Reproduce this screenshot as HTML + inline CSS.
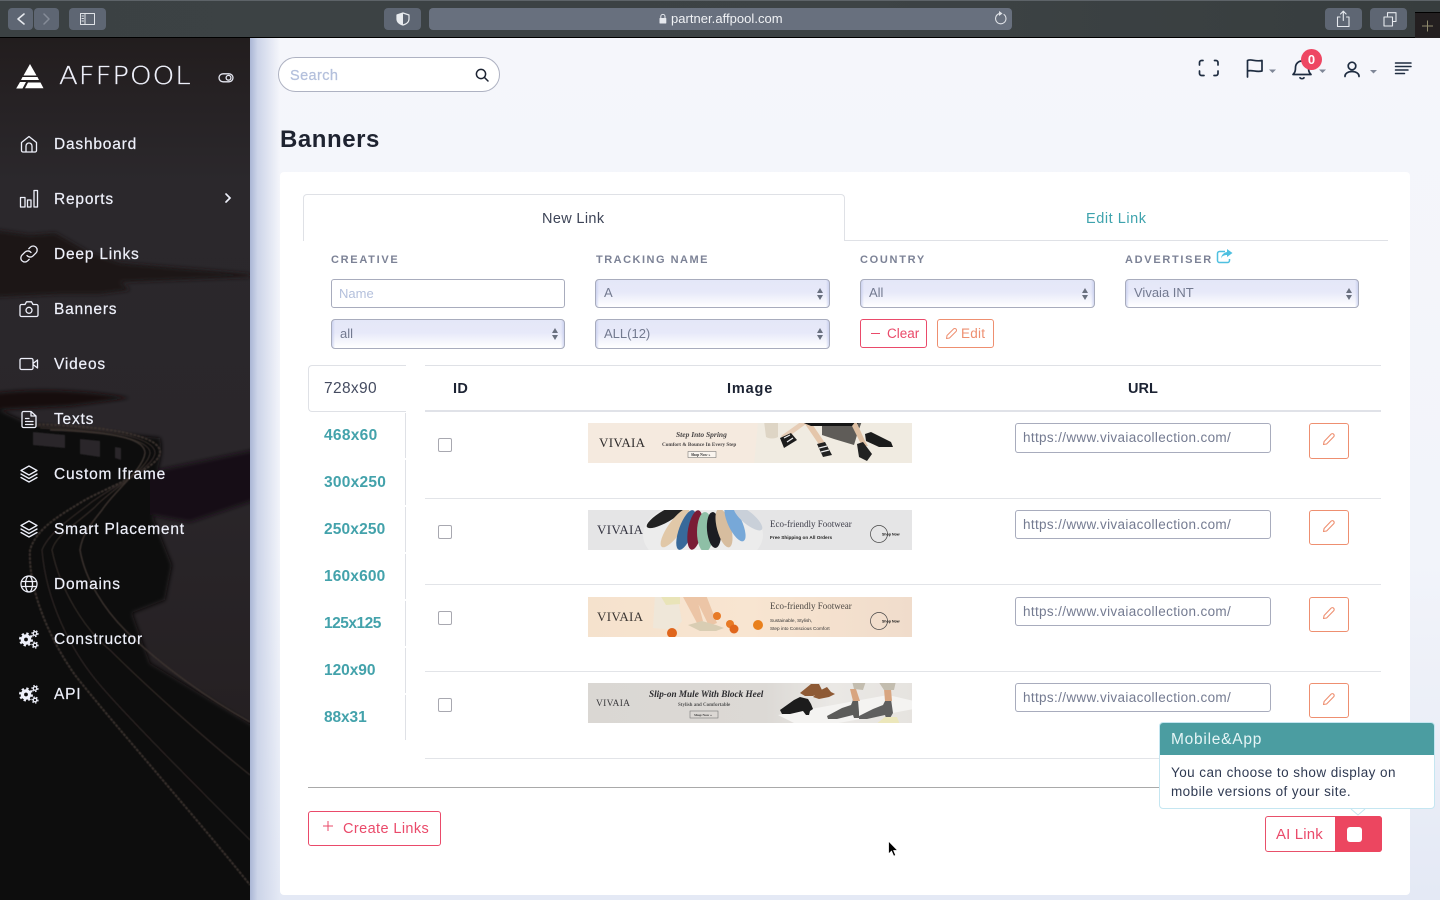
<!DOCTYPE html>
<html lang="en"><head><meta charset="utf-8"><title>Banners</title>
<style>
*{box-sizing:border-box}
html,body{margin:0;padding:0;width:1440px;height:900px;overflow:hidden;background:#f4f6fb;font-family:"Liberation Sans",sans-serif}
.a{position:absolute}
.t{position:absolute;white-space:nowrap}
.bb{position:absolute;top:8px;height:22px;background:#5e6673;border-radius:4px}
.nav{position:absolute;left:54px;color:#eef0fa;font:15.5px/20px "Liberation Sans",sans-serif;letter-spacing:.8px;white-space:nowrap;-webkit-text-stroke:.2px #eef0fa}
.ni{position:absolute;left:19px;width:20px;height:20px;fill:none;stroke:#eef0fa;stroke-width:1.3;stroke-linecap:round;stroke-linejoin:round}
.lb{position:absolute;top:254px;font:bold 11px/13px "Liberation Sans",sans-serif;letter-spacing:1.7px;color:#7c8296;white-space:nowrap}
.in{position:absolute;background:#fff;border:1px solid #a8acbd;border-radius:3px;font-size:13px;color:#777d92;padding:0 7px;line-height:27px;white-space:nowrap}
.sel{position:absolute;height:29px;border:1px solid #a8acbd;border-radius:4px;background:linear-gradient(90deg,rgba(190,198,235,.65),rgba(255,255,255,0) 3px,rgba(255,255,255,0) calc(100% - 3px),rgba(190,198,235,.65)),linear-gradient(#e4e7f8 0,#e7e9f9 45%,#fff 100%);font-size:13px;color:#737a90;padding:0 8px;line-height:25px}
.sel:after{content:"";position:absolute;right:6px;top:8px;width:0;height:0;border-left:3px solid transparent;border-right:3px solid transparent;border-bottom:5px solid #69707f}
.sel:before{content:"";position:absolute;right:6px;top:15px;width:0;height:0;border-left:3px solid transparent;border-right:3px solid transparent;border-top:5px solid #69707f}
.vt{position:absolute;left:324px;color:#43a2ab;font:bold 15.5px/18px "Liberation Sans",sans-serif;letter-spacing:.15px;white-space:nowrap}
.vl{position:absolute;left:405px;width:1px;height:44px;background:#dfe1e6}
.hl{position:absolute;left:425px;width:956px;height:1px;background:#e2e4e8}
.cb{position:absolute;left:438px;width:14px;height:14px;border:1px solid #a8a8b0;border-radius:2px;background:#fff}
.url{position:absolute;left:1015px;width:256px;height:30px;background:#fff;border:1px solid #a8acbd;border-radius:3px;font-size:13.5px;letter-spacing:.35px;color:#747b91;padding-left:7px;line-height:27px;white-space:nowrap}
.eb{position:absolute;left:1309px;width:40px;height:36px;border:1px solid #ee8f70;border-radius:3px;background:#fff}
.eb svg{position:absolute;left:12px;top:8px}
.ban{position:absolute;left:588px;width:324px;height:40px;overflow:hidden}
svg text{font-family:"Liberation Serif",serif}
</style></head><body>

<!-- browser bar -->
<div class="a" style="left:0;top:0;width:1440px;height:38px;background:linear-gradient(90deg,#3b4143,#3d4345 60%,#373d3e);border-top:1px solid #5d6368;border-bottom:1px solid #000"></div>
<div class="bb" style="left:8px;width:25px"></div>
<div class="bb" style="left:34px;width:25px"></div>
<div class="bb" style="left:69px;width:37px"></div>
<div class="bb" style="left:384px;width:37px"></div>
<div class="bb" style="left:429px;width:583px;background:#68707e"></div>
<div class="bb" style="left:1325px;width:37px"></div>
<div class="bb" style="left:1370px;width:37px"></div>
<svg class="a" style="left:0;top:0" width="1440" height="38" fill="none" stroke-linecap="round" stroke-linejoin="round">
<path d="M24 14l-6 5 6 5" stroke="#e6e9ee" stroke-width="1.6"/>
<path d="M44 14l5 5-5 5" stroke="#858c98" stroke-width="1.5"/>
<path d="M80.5 13.5h14v11h-14zM85 13.5v11M82 16h1.5M82 18.500h1.500M82 21h1.500" stroke="#dfe2e7"/>
<path d="M403 13l-6 2v4c0 3 2.500 5 6 6 3.500-1 6-3 6-6v-4z" stroke="#e8ebef" stroke-width="1.200"/>
<path d="M403 13l-6 2v4c0 3 2.500 5 6 6z" fill="#e8ebef"/>
<path d="M660 18.500h5.800v4.500H660z" fill="#e6e9ee" stroke="#e6e9ee"/>
<path d="M660.800 18v-1.500a2.100 2.100 0 0 1 4.200 0V18" stroke="#e6e9ee"/>
<path d="M1004 14.500a5.200 5.200 0 1 1-5-.8" stroke="#dfe2e7" stroke-width="1.100"/>
<path d="M999 11l3.500 2.500-3.500 2.500z" fill="#dfe2e7"/>
<path d="M1340 17h-2.500v9.500h11.500V17h-2.500M1343.300 20.500V11.500M1340.500 14l2.800-2.800 2.800 2.800" stroke="#e6e9ee" stroke-width="1.100"/>
<path d="M1384 18.500v7.500h8.500v-9H1384zM1387.500 16v-3.300h8.500v8.800h-3" stroke="#e6e9ee" stroke-width="1.100"/>
</svg>
<div class="t" style="left:671px;top:11px;font:13px/16px 'Liberation Sans',sans-serif;color:#f0f2f5;letter-spacing:.03px">partner.affpool.com</div>
<div class="a" style="left:1415px;top:12px;width:25px;height:26px;background:#231f20;border-top:1px solid #000"></div>
<svg class="a" style="left:1420px;top:18px" width="15" height="15"><path d="M2 8h11M7.500 2.500v11" stroke="#8f8a6c" stroke-width="1"/></svg>

<!-- main background -->
<div class="a" style="left:250px;top:38px;width:1190px;height:862px;background:linear-gradient(#f5f6fb 0,#f2f4fa 60%,#e4e9f5 100%)"></div>
<div class="a" style="left:250px;top:38px;width:30px;height:862px;background:linear-gradient(90deg,#aab6d5 0,#ccd4e8 25%,rgba(240,243,250,0) 100%)"></div>

<!-- sidebar -->
<svg class="a" style="left:0;top:38px" width="250" height="862" viewBox="0 38 250 862">
<defs>
<linearGradient id="sk" gradientUnits="userSpaceOnUse" x1="0" y1="38" x2="0" y2="760"><stop offset="0" stop-color="#221d1e"/><stop offset=".2" stop-color="#2b282c"/><stop offset=".6" stop-color="#2a262a"/><stop offset="1" stop-color="#241f21"/></linearGradient>
<filter id="b1" x="-5%" y="-5%" width="110%" height="110%"><feGaussianBlur stdDeviation="2"/></filter>
<filter id="b2" x="-5%" y="-5%" width="110%" height="110%"><feGaussianBlur stdDeviation=".5"/></filter>
</defs>
<rect x="0" y="38" width="250" height="862" fill="url(#sk)"/>
<g filter="url(#b1)">
<path d="M-5 230l35 5 25-2 35 20 30 10 130 11v3l-130 5 10 8-30 4-40 0-65 3z" fill="#1c1617"/>
<path d="M-5 393Q60 386 130 398L70 406-5 410z" fill="#151011"/>
<path d="M-5 408L30 424 160 438C166 460 150 480 150 510L172 565 165 600 132 613 150 663 255 727V905H-5z" fill="#0b0707"/>
<path d="M150 472L255 450V500L190 522 150 515z" fill="#171112"/>
</g>
<g filter="url(#b2)" fill="none">
<path d="M33 432l32 3v13l-32-3zM80 439l20 2v16l-20-3zM115 447l6 1v12l-6-2z" fill="#2b272b"/>
<path d="M30 424C110 426 162 436 160 453 158 470 100 490 80 503 55 518 36 530 30 550 28 590 50 640 75 675 110 720 190 810 250 885" stroke="#3a332e" stroke-width="2" stroke-dasharray="3 1"/>
<path d="M35 426C110 428 155 438 155 453 153 470 105 490 88 505 65 522 48 535 42 550 46 600 70 650 100 685 130 720 200 790 250 840" stroke="#2f2825" stroke-width="1.200"/>
<path d="M40 428C110 430 150 440 150 453 148 470 110 490 95 507 75 525 56 535 52 550 60 590 85 630 110 650 140 680 200 735 250 775" stroke="#332c28" stroke-width="1.200"/>
<path d="M50 430C120 432 145 440 145 453 143 470 115 490 102 510 90 525 82 535 80 550 85 580 105 610 125 630 160 665 210 700 250 722" stroke="#3a332e" stroke-width="1.500"/>
</g>
</svg>
<!-- logo -->
<svg class="a" style="left:15px;top:62px" width="32" height="28"><path d="M15 2l6.500 11.500H8.500z" fill="#fff"/><path d="M7.500 15h15l1.500 3H6z" fill="#fff"/><path d="M5 20h6l-3.500 6.500H1.200zM13 20.500h12.500l3 5.800H10z" fill="#fff"/></svg>
<div class="t" style="left:59px;top:61px;color:#eef0fa;font:200 25px/30px 'DejaVu Sans',sans-serif;letter-spacing:.9px;transform:scaleX(1.1);transform-origin:0 0;-webkit-text-stroke:.3px #eef0fa">AFFPOOL</div>
<svg class="a" style="left:217px;top:71px" width="18" height="14" fill="none" stroke="#e6e8f2"><rect x="2" y="2.800" width="14" height="8" rx="4" stroke-width="1.300"/><circle cx="11.500" cy="6.800" r="2.400" stroke-width="1.300"/></svg>

<svg class="ni" style="top:134px" viewBox="0 0 20 20"><path d="M2.500 8.500L10 2.500l7.500 6v8a1.500 1.500 0 0 1-1.500 1.500H4a1.500 1.500 0 0 1-1.500-1.500zM7 18v-6a3 3 0 0 1 6 0v6"/></svg>
<div class="nav" style="top:135px">Dashboard</div>
<svg class="ni" style="top:189px" viewBox="0 0 20 20"><path d="M1.500 8.500h4.500V18H1.500zM8.500 11h3.500v7H8.500zM15 1.500h3.500V18H15z"/></svg>
<div class="nav" style="top:190px">Reports</div>
<svg class="a" style="left:222px;top:192px" width="12" height="12" fill="none"><path d="M4 2l4 4-4 4" stroke="#eef0fa" stroke-width="1.700" stroke-linecap="round"/></svg>
<svg class="ni" style="top:244px" viewBox="0 0 20 20"><path d="M8 11.500a4 4 0 0 0 6 .4l3-3a4 4 0 0 0-5.700-5.700L9.800 4.700M12 8.500a4 4 0 0 0-6-.4l-3 3a4 4 0 0 0 5.700 5.700l1.500-1.500"/></svg>
<div class="nav" style="top:245px">Deep Links</div>
<svg class="ni" style="top:299px" viewBox="0 0 20 20"><path d="M2.500 5.500h3.500L7.500 2.800h5L14 5.500h3.500a1.500 1.500 0 0 1 1.500 1.500v9a1.500 1.500 0 0 1-1.500 1.500h-15A1.500 1.500 0 0 1 1 16V7a1.500 1.500 0 0 1 1.500-1.500z"/><circle cx="10" cy="11.300" r="3"/></svg>
<div class="nav" style="top:300px">Banners</div>
<svg class="ni" style="top:354px" viewBox="0 0 20 20"><path d="M2.500 4.500h10a1.500 1.500 0 0 1 1.500 1.500v8a1.500 1.500 0 0 1-1.500 1.500h-10A1.500 1.500 0 0 1 1 14V6a1.500 1.500 0 0 1 1.500-1.500zM14 9.500L18.500 6v8L14 10.500"/></svg>
<div class="nav" style="top:355px">Videos</div>
<svg class="ni" style="top:409px" viewBox="0 0 20 20"><path d="M4.500 2.500H12l5 4.500v10a1.500 1.500 0 0 1-1.500 1.500h-11A1.500 1.500 0 0 1 3 17V4a1.500 1.500 0 0 1 1.500-1.500zM12 2.500V7h5M6.500 9.500H10M6.500 12.500h7.500M6.500 15.500h7.500"/></svg>
<div class="nav" style="top:410px">Texts</div>
<svg class="ni" style="top:464px" viewBox="0 0 20 20"><path d="M10 2L2 6.500 10 11l8-4.500zM2 10l8 4.500L18 10M2 13.500L10 18l8-4.500"/></svg>
<div class="nav" style="top:465px">Custom Iframe</div>
<svg class="ni" style="top:519px" viewBox="0 0 20 20"><path d="M10 2L2 6.500 10 11l8-4.500zM2 10l8 4.500L18 10M2 13.500L10 18l8-4.500"/></svg>
<div class="nav" style="top:520px">Smart Placement</div>
<svg class="ni" style="top:574px" viewBox="0 0 20 20"><circle cx="10" cy="10" r="8"/><ellipse cx="10" cy="10" rx="3.500" ry="8"/><path d="M2.500 7.500h15M2.500 12.500h15"/></svg>
<div class="nav" style="top:575px">Domains</div>
<svg class="ni" style="top:629px" viewBox="0 0 20 20"><circle cx="7" cy="10.500" r="3.600" stroke-width="3.400"/><circle cx="7" cy="10.500" r="6" stroke-width="2" stroke-dasharray="2.360 2.360" stroke-linecap="butt"/><circle cx="16" cy="4.500" r="1.800" stroke-width="1.300"/><circle cx="16" cy="4.500" r="3" stroke-width="1.200" stroke-dasharray="1.500 1.500" stroke-linecap="butt"/><circle cx="16" cy="16" r="1.800" stroke-width="1.300"/><circle cx="16" cy="16" r="3" stroke-width="1.200" stroke-dasharray="1.500 1.500" stroke-linecap="butt"/></svg>
<div class="nav" style="top:630px">Constructor</div>
<svg class="ni" style="top:684px" viewBox="0 0 20 20"><circle cx="7" cy="10.500" r="3.600" stroke-width="3.400"/><circle cx="7" cy="10.500" r="6" stroke-width="2" stroke-dasharray="2.360 2.360" stroke-linecap="butt"/><circle cx="16" cy="4.500" r="1.800" stroke-width="1.300"/><circle cx="16" cy="4.500" r="3" stroke-width="1.200" stroke-dasharray="1.500 1.500" stroke-linecap="butt"/><circle cx="16" cy="16" r="1.800" stroke-width="1.300"/><circle cx="16" cy="16" r="3" stroke-width="1.200" stroke-dasharray="1.500 1.500" stroke-linecap="butt"/></svg>
<div class="nav" style="top:685px">API</div>

<!-- topbar -->
<div class="a" style="left:278px;top:57px;width:222px;height:35px;background:#fff;border:1px solid #aeb2c2;border-radius:18px"></div>
<div class="t" style="left:290px;top:67px;font:14.500px/18px 'Liberation Sans',sans-serif;color:#b4c0dc;letter-spacing:.4px;-webkit-text-stroke:.25px #b4c0dc">Search</div>
<svg class="a" style="left:474px;top:67px" width="16" height="16" fill="none" stroke="#1d2433" stroke-width="1.500"><circle cx="7" cy="7" r="4.600"/><path d="M10.500 10.500l3.500 3.500" stroke-linecap="round"/></svg>

<svg class="a" style="left:1190px;top:50px" width="235" height="40" fill="none" stroke="#1e2c40" stroke-width="1.700" stroke-linecap="round" stroke-linejoin="round">
<path d="M13 10.500h-1.500a2 2 0 0 0-2 2V15M24.500 10.500H26a2 2 0 0 1 2 2V15M9.500 21v2.500a2 2 0 0 0 2 2H14M28 21v2.500a2 2 0 0 1-2 2H24"/>
<path d="M57.500 27V10.500c4-2 7 1.500 14.500 0V21c-6 1.500-10-1.500-14.500 0"/>
<path d="M79 19.500h7l-3.500 3.500z" fill="#7f8797" stroke="none"/>
<path d="M103 24.500c2-2 2.500-3.500 2.500-7a6.500 6.500 0 0 1 13 0c0 3.500.5 5 2.500 7zM110 27.800c1 1.200 3 1.200 4 0"/>
<path d="M129 19.500h7l-3.500 3.500z" fill="#7f8797" stroke="none"/>
<circle cx="162" cy="16" r="3.800"/><path d="M155 26.500v-.5a7 4.500 0 0 1 14 0v.5"/>
<path d="M180 20h7l-3.500 3.500z" fill="#7f8797" stroke="none"/>
<path d="M205.500 13h15.500M205.500 16.500h15.500M205.500 20h12.500M205.500 23.500h9" stroke-width="1.500"/>
</svg>
<div class="a" style="left:1301px;top:49px;width:21px;height:21px;border-radius:50%;background:#ee4763;color:#fff;font:bold 13px/21px 'Liberation Sans',sans-serif;text-align:center">0</div>

<div class="t" style="left:280px;top:125px;font:bold 24px/30px 'Liberation Sans',sans-serif;color:#1e2330;letter-spacing:.55px">Banners</div>

<!-- card -->
<div class="a" style="left:280px;top:172px;width:1130px;height:723px;background:#fff;border-radius:4px"></div>
<div class="a" style="left:845px;top:240px;width:543px;height:1px;background:#dfe1e6"></div>
<div class="a" style="left:303px;top:194px;width:542px;height:47px;border:1px solid #dfe1e6;border-bottom:0;border-radius:4px 4px 0 0;background:#fff"></div>
<div class="t" style="left:542px;top:210px;font:14.500px/18px 'Liberation Sans',sans-serif;color:#3d4457;letter-spacing:.35px">New Link</div>
<div class="t" style="left:1086px;top:210px;font:14.500px/18px 'Liberation Sans',sans-serif;color:#3ea3ad;letter-spacing:.55px">Edit Link</div>

<div class="lb" style="left:331px">CREATIVE</div>
<div class="lb" style="left:596px;letter-spacing:1.5px">TRACKING NAME</div>
<div class="lb" style="left:860px">COUNTRY</div>
<div class="lb" style="left:1125px">ADVERTISER</div>
<svg class="a" style="left:1216px;top:248px" width="18" height="16" fill="none"><path d="M9 3.500H3.500a2 2 0 0 0-2 2v7a2 2 0 0 0 2 2h8a2 2 0 0 0 2-2V11" stroke="#4fc0e0" stroke-width="1.500"/><path d="M11 1l5.500 4-5.500 4V7c-3 0-5 1-6 3.500C5.500 6.500 8 4.500 11 4z" fill="#4fc0e0"/></svg>

<div class="in" style="left:331px;top:279px;width:234px;height:29px;color:#b4c0dc;font-size:13px">Name</div>
<div class="sel" style="left:595px;top:279px;width:235px">A</div>
<div class="sel" style="left:860px;top:279px;width:235px">All</div>
<div class="sel" style="left:1125px;top:279px;width:234px">Vivaia INT</div>
<div class="sel" style="left:331px;top:319px;width:234px;height:30px;line-height:27px">all</div>
<div class="sel" style="left:595px;top:319px;width:235px;height:30px;line-height:27px">ALL(12)</div>

<div class="a" style="left:860px;top:319px;width:67px;height:29px;border:1px solid #ea4a6a;border-radius:3px;background:#fff"></div>
<div class="a" style="left:871px;top:333px;width:9px;height:1px;background:#ea4a6a"></div>
<div class="t" style="left:887px;top:325px;font:13.500px/17px 'Liberation Sans',sans-serif;color:#ea4a6a">Clear</div>
<div class="a" style="left:937px;top:319px;width:57px;height:29px;border:1px solid #ee8f70;border-radius:3px;background:#fff"></div>
<svg class="a" style="left:945px;top:327px" width="13" height="13" fill="none" stroke="#ee8f70" stroke-linejoin="round"><path d="M1.500 11.500l.5-3L8.500 2a1.400 1.400 0 0 1 2.500 2.500L4.500 11z"/></svg>
<div class="t" style="left:961px;top:325px;font:13.500px/17px 'Liberation Sans',sans-serif;color:#ee8f70;letter-spacing:.25px">Edit</div>

<!-- vertical tabs + table -->
<div class="a" style="left:425px;top:365px;width:956px;height:1px;background:#dfe1e6"></div>
<div class="a" style="left:308px;top:365px;width:98px;height:47px;border:1px solid #dfe1e6;border-right:0;border-radius:4px 0 0 4px;background:#fff"></div>
<div class="t" style="left:324px;top:380px;font:15.500px/18px 'Liberation Sans',sans-serif;color:#444b60;letter-spacing:.35px">728x90</div>
<div class="vt" style="top:427px;letter-spacing:.3px">468x60</div>
<div class="vt" style="top:474px;letter-spacing:.25px">300x250</div>
<div class="vt" style="top:521px">250x250</div>
<div class="vt" style="top:568px">160x600</div>
<div class="vt" style="top:615px;letter-spacing:-.5px">125x125</div>
<div class="vt" style="top:662px;letter-spacing:-.05px">120x90</div>
<div class="vt" style="top:709px;letter-spacing:-.1px">88x31</div>
<div class="vl" style="top:413px;height:45px"></div><div class="vl" style="top:460px;height:45px"></div><div class="vl" style="top:507px;height:45px"></div><div class="vl" style="top:554px;height:45px"></div><div class="vl" style="top:601px;height:45px"></div><div class="vl" style="top:648px;height:45px"></div><div class="vl" style="top:695px;height:45px"></div>

<div class="t" style="left:453px;top:380px;font:bold 14.500px/18px 'Liberation Sans',sans-serif;color:#1c2333;letter-spacing:.3px">ID</div>
<div class="t" style="left:727px;top:380px;font:bold 14.500px/18px 'Liberation Sans',sans-serif;color:#1c2333;letter-spacing:.85px">Image</div>
<div class="t" style="left:1128px;top:380px;font:bold 14.500px/18px 'Liberation Sans',sans-serif;color:#1c2333">URL</div>
<div class="hl" style="top:410px;height:2px;background:#e0e2e8"></div>
<div class="hl" style="top:498px"></div><div class="hl" style="top:584px"></div><div class="hl" style="top:671px"></div><div class="hl" style="top:758px"></div>

<div class="cb" style="top:438px"></div><div class="cb" style="top:525px"></div><div class="cb" style="top:611px"></div><div class="cb" style="top:698px"></div>

<svg width="0" height="0" style="position:absolute"><defs><filter id="bl" x="0" y="0" width="100%" height="100%"><feGaussianBlur stdDeviation=".3"/></filter></defs></svg>

<!-- banner 1 -->
<svg class="ban" style="top:423px" viewBox="0 0 324 40"><g filter="url(#bl)"><rect x="-2" y="-2" width="328" height="44" fill="#f5eadf"/><path d="M170 0h156v42H166z" fill="#f0ebe1"/>
<path d="M176 -2h14v16c-3 2-9 2-12 0z" fill="#ded5c5"/>
<path d="M214 -2l-21 15 3 4 26-19z" fill="#e7cdb6"/><path d="M192 15l11-5 6 7-13 8z" fill="#1f1f1f"/><path d="M196 15l6-3M199 19l6-4" stroke="#eee" stroke-width="1.200"/>
<path d="M222 -2l15 22-5 3-17-25z" fill="#e4c6ab"/><path d="M229 21l8-2 7 13-9 2z" fill="#222"/><path d="M231 25l8-2M233 29l8-2" stroke="#eee" stroke-width="1.200"/>
<path d="M234 -2h40l-5 14-3 10-20-6-12-4z" fill="#5f5c58"/><path d="M211 -2h62l-6 5h-44z" fill="#191919"/>
<path d="M268 -2l9 20 3 5-6 0-10-20z" fill="#dfc0a3"/><path d="M269 21l6-2 9 12-5 7-8-4z" fill="#222"/><path d="M277 11l6-2 20 10 2 5-14 0-13-6z" fill="#1d1c1c"/>
<text x="11" y="24" font-size="13" fill="#2e2c2c" letter-spacing=".3">VIVAIA</text>
<text x="88" y="14" font-size="7.500" font-style="italic" font-weight="bold" fill="#4a4646">Step Into Spring</text>
<text x="74" y="23" font-size="5.200" font-weight="bold" fill="#4a4646">Comfort &amp; Bounce In Every Step</text>
<rect x="100" y="28.500" width="28" height="6" fill="#fff" fill-opacity=".5" stroke="#666" stroke-width=".5"/><text x="103" y="33" font-size="3.800" font-weight="bold" fill="#333">Shop Now »</text></g></svg>
<!-- banner 2 -->
<svg class="ban" style="top:510px" viewBox="0 0 324 40"><g filter="url(#bl)"><rect x="-2" y="-2" width="328" height="44" fill="#e5e5e6"/><ellipse cx="115" cy="25" rx="60" ry="35" fill="#ececec"/>
<ellipse cx="78" cy="6" rx="22" ry="6" transform="rotate(-30 78 6)" fill="#222"/>
<ellipse cx="87" cy="18" rx="23" ry="7" transform="rotate(-55 87 18)" fill="#e1c8a8"/>
<ellipse cx="98" cy="20" rx="21" ry="7" transform="rotate(-70 98 20)" fill="#38699a"/>
<ellipse cx="107" cy="20" rx="20" ry="7" transform="rotate(-80 107 20)" fill="#7a1d36"/>
<ellipse cx="117" cy="22" rx="20" ry="8" transform="rotate(-90 117 22)" fill="#8ebfa6"/>
<ellipse cx="126" cy="20" rx="18" ry="7" transform="rotate(85 126 20)" fill="#1f1f22"/>
<ellipse cx="136" cy="18" rx="20" ry="7" transform="rotate(75 136 18)" fill="#d7bd9f"/>
<ellipse cx="147" cy="13" rx="20" ry="7" transform="rotate(65 147 13)" fill="#77a8d8"/>
<ellipse cx="160" cy="8" rx="18" ry="6" transform="rotate(40 160 8)" fill="#c9d0d9"/>
<text x="9" y="24" font-size="13" fill="#33333f" letter-spacing=".3">VIVAIA</text>
<text x="182" y="17" font-size="9" fill="#3e3e4a">Eco-friendly Footwear</text>
<text x="182" y="29" font-size="4.700" font-weight="bold" fill="#222" style="font-family:'Liberation Sans',sans-serif">Free Shipping on All Orders</text>
<circle cx="291" cy="24" r="8.500" fill="none" stroke="#444" stroke-width=".7"/><text x="294" y="25.500" font-size="3.600" font-weight="bold" fill="#111" style="font-family:'Liberation Sans',sans-serif">Shop Now</text></g></svg>
<!-- banner 3 -->
<svg class="ban" style="top:597px" viewBox="0 0 324 40"><defs><linearGradient id="o" x1="0" x2="1" y1="0" y2="0"><stop offset="0" stop-color="#f5e2cd"/><stop offset=".5" stop-color="#f8e5d1"/><stop offset="1" stop-color="#f0dccb"/></linearGradient></defs><g filter="url(#bl)"><rect x="-2" y="-2" width="328" height="44" fill="url(#o)"/>
<path d="M67 -2h22l5 26-7 9-22-2z" fill="#efe7d9"/><path d="M72 -2h20v9l-14 1z" fill="#e9e4b8"/>
<path d="M94 -2h14l7 26-6 2zM106 -2h12l11 28-8 3z" fill="#ecc5a6"/><path d="M100 28l14-4 14 4 8 3-8 3-16 0z" fill="#d9cdb3"/>
<circle cx="129" cy="19" r="4" fill="#e87a26"/><circle cx="142" cy="27" r="4" fill="#e87a26"/><circle cx="146" cy="32" r="4.500" fill="#e0661e"/><circle cx="170" cy="28" r="5" fill="#e9801f"/><circle cx="84" cy="36" r="5" fill="#e0661e"/>
<text x="9" y="24" font-size="13" fill="#3a3532" letter-spacing=".3">VIVAIA</text>
<text x="182" y="12" font-size="9" fill="#4e4944">Eco-friendly Footwear</text>
<text x="182" y="25" font-size="4.700" fill="#333" style="font-family:'Liberation Sans',sans-serif">Sustainable, Stylish,</text>
<text x="182" y="33" font-size="4.700" fill="#333" style="font-family:'Liberation Sans',sans-serif">Step into Conscious Comfort</text>
<circle cx="291" cy="24" r="8.500" fill="none" stroke="#444" stroke-width=".7"/><text x="294" y="25.500" font-size="3.600" font-weight="bold" fill="#111" style="font-family:'Liberation Sans',sans-serif">Shop Now</text></g></svg>
<!-- banner 4 -->
<svg class="ban" style="top:683px" viewBox="0 0 324 40"><defs><linearGradient id="g4" x1="0" x2="1" y1="0" y2="0"><stop offset="0" stop-color="#dad7d3"/><stop offset=".55" stop-color="#dcd9d5"/><stop offset=".75" stop-color="#eae8e5"/><stop offset="1" stop-color="#e6e3df"/></linearGradient></defs><g filter="url(#bl)"><rect x="-2" y="-2" width="328" height="44" fill="url(#g4)"/><path d="M190 32L300 12l26 6v8L240 42h-30z" fill="#f4f3f1"/>
<path d="M192 27l14-10 6-3 8 2 3 5 2 5-3 2-1 4-3 0-3-4-13 3-8 0z" fill="#1b1b1c"/>
<path d="M212 10l11-9 8 0 3 6 1 2-10 4-8 0zM225 14l8-7 6-3 4 5 4 2-6 3-10 2z" fill="#8e5a34"/>
<path d="M239 33l15-8 9-3 2-5 5 0 1 12 0 6-5 0-1-3-16 4-9 0z" fill="#5b5b5a"/><path d="M271 33l14-7 10-4 3-6 5 0 2 14-3 5-4 0-1-3-18 4-8 0z" fill="#5f5f5e"/>
<path d="M265 18l-3-12 6 0 4 12zM297 18l-1-12 7 0 1 12z" fill="#d8a580"/><path d="M264 -2h14l-3 9-9-1zM290 -2h18l-2 9-10 0z" fill="#c3bdaf"/>
<path d="M287 42l10-8 12 0 3 8z" fill="#ece7bb"/>
<text x="8" y="23" font-size="9.500" fill="#3a3a3d" letter-spacing=".3">VIVAIA</text>
<text x="61" y="14" font-size="9.200" font-weight="bold" font-style="italic" fill="#2c2c2f">Slip-on Mule With Block Heel</text>
<text x="90" y="23" font-size="5" font-weight="bold" fill="#555">Stylish and Comfortable</text>
<rect x="102" y="28" width="28" height="7" fill="none" stroke="#777" stroke-width=".6"/><text x="106" y="33" font-size="3.500" font-weight="bold" fill="#333">Shop Now »</text></g></svg>

<div class="url" style="top:423px">https://www.vivaiacollection.com/</div>
<div class="url" style="top:510px;height:29px">https://www.vivaiacollection.com/</div>
<div class="url" style="top:597px;height:29px">https://www.vivaiacollection.com/</div>
<div class="url" style="top:683px;height:29px">https://www.vivaiacollection.com/</div>

<div class="eb" style="top:423px"><svg width="14" height="14" fill="none" stroke="#ee8f70" stroke-width="1.100" stroke-linejoin="round"><path d="M1.500 12.500l.6-3L9 2.300a1.600 1.600 0 0 1 2.700 2.500L4.600 12z"/></svg></div>
<div class="eb" style="top:510px;height:35px"><svg width="14" height="14" fill="none" stroke="#ee8f70" stroke-width="1.100" stroke-linejoin="round"><path d="M1.500 12.500l.6-3L9 2.300a1.600 1.600 0 0 1 2.700 2.500L4.600 12z"/></svg></div>
<div class="eb" style="top:597px;height:35px"><svg width="14" height="14" fill="none" stroke="#ee8f70" stroke-width="1.100" stroke-linejoin="round"><path d="M1.500 12.500l.6-3L9 2.300a1.600 1.600 0 0 1 2.700 2.500L4.600 12z"/></svg></div>
<div class="eb" style="top:683px;height:35px"><svg width="14" height="14" fill="none" stroke="#ee8f70" stroke-width="1.100" stroke-linejoin="round"><path d="M1.500 12.500l.6-3L9 2.300a1.600 1.600 0 0 1 2.700 2.500L4.600 12z"/></svg></div>

<!-- bottom -->
<div class="a" style="left:308px;top:787px;width:860px;height:1px;background:#a9a9a9"></div>
<div class="a" style="left:308px;top:811px;width:133px;height:35px;border:1px solid #ea4a6a;border-radius:3px;background:#fff"></div>
<svg class="a" style="left:322px;top:820px" width="12" height="12"><path d="M1 6h10M6 1v10" stroke="#ea4a6a" stroke-width="1"/></svg>
<div class="t" style="left:343px;top:820px;font:14.500px/18px 'Liberation Sans',sans-serif;color:#ea4a6a;letter-spacing:.4px">Create Links</div>

<div class="a" style="left:1265px;top:816px;width:117px;height:36px;border:1px solid #e8506a;border-radius:3px;background:#fff"></div>
<div class="a" style="left:1335px;top:816px;width:47px;height:36px;background:#ec4660;border-radius:0 3px 3px 0"></div>
<div class="a" style="left:1347px;top:827px;width:15px;height:15px;background:#fff;border-radius:3px"></div>
<div class="t" style="left:1276px;top:826px;font:15px/18px 'Liberation Sans',sans-serif;color:#ea4a6a;letter-spacing:.15px">AI Link</div>

<div class="a" style="left:1159px;top:722px;width:276px;height:87px;background:#fff;border:1px solid #c5e6f1;border-radius:4px;overflow:hidden">
 <div style="height:32px;background:#4b9da1;color:#e5f5f6;font:15.500px/34px 'Liberation Sans',sans-serif;padding-left:11px;letter-spacing:.75px">Mobile&amp;App</div>
 <div style="padding:8px 11px 0;font:13.500px/19px 'Liberation Sans',sans-serif;color:#2f3a52;letter-spacing:.44px">You can choose to show display on<br>mobile versions of your site.</div>
</div>
<svg class="a" style="left:1350px;top:809px" width="16" height="8"><path d="M1 0l7 6 7-6" fill="#fff" stroke="#c5e6f1"/></svg>

<svg class="a" style="left:887px;top:840px" width="14" height="20"><path d="M1.500 1v13l3-2.800 2.200 5 2-1-2-4.700h4z" fill="#000" stroke="#fff" stroke-width=".8"/></svg>
</body></html>
